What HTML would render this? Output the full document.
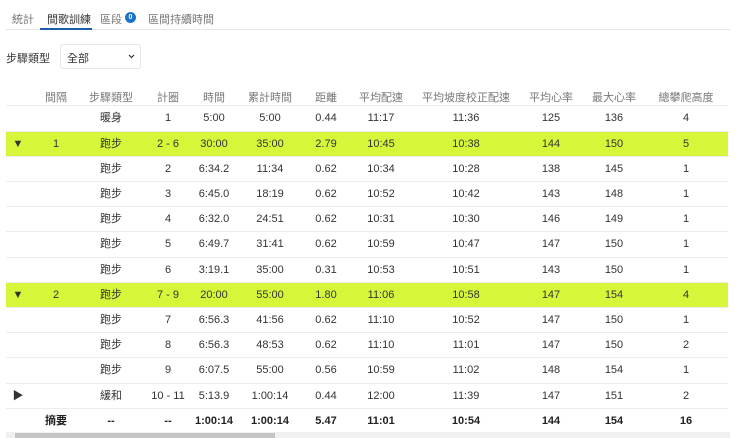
<!DOCTYPE html><html><head><meta charset="utf-8"><style>
*{margin:0;padding:0;box-sizing:border-box}
body{width:740px;height:438px;overflow:hidden;background:#fff;font-family:"Liberation Sans","Noto Sans CJK TC",sans-serif;font-size:11px;color:#333;position:relative}
.a{position:absolute}
.r{position:absolute;left:6px;width:722px;height:25.2px;border-bottom:1px solid #ececec}
.r span{position:absolute;top:0;line-height:25px;width:80px;text-align:center;white-space:nowrap}
.g{background:#d6f63a}
.h span{color:#777}
.b span{font-weight:bold;color:#222}
</style></head><body>
<div class="a" style="top:11px;left:12px;color:#777">統計</div>
<div class="a" style="top:11px;left:47px;color:#333">間歌訓練</div>
<div class="a" style="top:11px;left:100px;color:#777">區段</div>
<div class="a" style="top:12px;left:125px;width:11px;height:11px;border-radius:6px;background:#1a73c8;color:#fff;font-size:7px;text-align:center;line-height:11px;font-weight:bold">0</div>
<div class="a" style="top:11px;left:148px;color:#777">區間持續時間</div>
<div class="a" style="top:29px;left:6px;width:724px;height:1px;background:#e6e6e6"></div>
<div class="a" style="top:28px;left:40px;width:52px;height:2px;background:#1a5fa8"></div>
<div class="a" style="top:50px;left:6px">步驟類型</div>
<div class="a" style="top:44px;left:60px;width:81px;height:25px;border:1px solid #e6e6e6;border-radius:3px"></div>
<div class="a" style="top:50px;left:67px">全部</div>
<svg class="a" style="top:54px;left:128px" width="7" height="5"><path d="M1 1L3.5 3.5L6 1" stroke="#333" fill="none" stroke-width="1.2"/></svg>
<div class="r h" style="top:85px;height:21.4px"><span style="left:10px;line-height:26px">間隔</span><span style="left:65px;line-height:26px">步驟類型</span><span style="left:122px;line-height:26px">計圈</span><span style="left:168px;line-height:26px">時間</span><span style="left:224px;line-height:26px">累計時間</span><span style="left:280px;line-height:26px">距離</span><span style="left:335px;line-height:26px">平均配速</span><span style="left:400px;width:120px;line-height:26px">平均坡度校正配速</span><span style="left:505px;line-height:26px">平均心率</span><span style="left:568px;line-height:26px">最大心率</span><span style="left:640px;line-height:26px">總攀爬高度</span></div>
<div class="r" style="top:106.4px"><span style="left:65px">暖身</span><span style="left:122px">1</span><span style="left:168px">5:00</span><span style="left:224px">5:00</span><span style="left:280px">0.44</span><span style="left:335px">11:17</span><span style="left:420px">11:36</span><span style="left:505px">125</span><span style="left:568px">136</span><span style="left:640px">4</span></div>
<div class="r g" style="top:131.6px"><span style="left:-28px">▼</span><span style="left:10px">1</span><span style="left:65px">跑步</span><span style="left:122px">2 - 6</span><span style="left:168px">30:00</span><span style="left:224px">35:00</span><span style="left:280px">2.79</span><span style="left:335px">10:45</span><span style="left:420px">10:38</span><span style="left:505px">144</span><span style="left:568px">150</span><span style="left:640px">5</span></div>
<div class="r" style="top:156.8px"><span style="left:65px">跑步</span><span style="left:122px">2</span><span style="left:168px">6:34.2</span><span style="left:224px">11:34</span><span style="left:280px">0.62</span><span style="left:335px">10:34</span><span style="left:420px">10:28</span><span style="left:505px">138</span><span style="left:568px">145</span><span style="left:640px">1</span></div>
<div class="r" style="top:182px"><span style="left:65px">跑步</span><span style="left:122px">3</span><span style="left:168px">6:45.0</span><span style="left:224px">18:19</span><span style="left:280px">0.62</span><span style="left:335px">10:52</span><span style="left:420px">10:42</span><span style="left:505px">143</span><span style="left:568px">148</span><span style="left:640px">1</span></div>
<div class="r" style="top:207.2px"><span style="left:65px">跑步</span><span style="left:122px">4</span><span style="left:168px">6:32.0</span><span style="left:224px">24:51</span><span style="left:280px">0.62</span><span style="left:335px">10:31</span><span style="left:420px">10:30</span><span style="left:505px">146</span><span style="left:568px">149</span><span style="left:640px">1</span></div>
<div class="r" style="top:232.4px"><span style="left:65px">跑步</span><span style="left:122px">5</span><span style="left:168px">6:49.7</span><span style="left:224px">31:41</span><span style="left:280px">0.62</span><span style="left:335px">10:59</span><span style="left:420px">10:47</span><span style="left:505px">147</span><span style="left:568px">150</span><span style="left:640px">1</span></div>
<div class="r" style="top:257.6px"><span style="left:65px">跑步</span><span style="left:122px">6</span><span style="left:168px">3:19.1</span><span style="left:224px">35:00</span><span style="left:280px">0.31</span><span style="left:335px">10:53</span><span style="left:420px">10:51</span><span style="left:505px">143</span><span style="left:568px">150</span><span style="left:640px">1</span></div>
<div class="r g" style="top:282.8px"><span style="left:-28px">▼</span><span style="left:10px">2</span><span style="left:65px">跑步</span><span style="left:122px">7 - 9</span><span style="left:168px">20:00</span><span style="left:224px">55:00</span><span style="left:280px">1.80</span><span style="left:335px">11:06</span><span style="left:420px">10:58</span><span style="left:505px">147</span><span style="left:568px">154</span><span style="left:640px">4</span></div>
<div class="r" style="top:308px"><span style="left:65px">跑步</span><span style="left:122px">7</span><span style="left:168px">6:56.3</span><span style="left:224px">41:56</span><span style="left:280px">0.62</span><span style="left:335px">11:10</span><span style="left:420px">10:52</span><span style="left:505px">147</span><span style="left:568px">150</span><span style="left:640px">1</span></div>
<div class="r" style="top:333.2px"><span style="left:65px">跑步</span><span style="left:122px">8</span><span style="left:168px">6:56.3</span><span style="left:224px">48:53</span><span style="left:280px">0.62</span><span style="left:335px">11:10</span><span style="left:420px">11:01</span><span style="left:505px">147</span><span style="left:568px">150</span><span style="left:640px">2</span></div>
<div class="r" style="top:358.4px"><span style="left:65px">跑步</span><span style="left:122px">9</span><span style="left:168px">6:07.5</span><span style="left:224px">55:00</span><span style="left:280px">0.56</span><span style="left:335px">10:59</span><span style="left:420px">11:02</span><span style="left:505px">148</span><span style="left:568px">154</span><span style="left:640px">1</span></div>
<div class="r" style="top:383.6px"><span style="left:-28px">▶</span><span style="left:65px">緩和</span><span style="left:122px">10 - 11</span><span style="left:168px">5:13.9</span><span style="left:224px">1:00:14</span><span style="left:280px">0.44</span><span style="left:335px">12:00</span><span style="left:420px">11:39</span><span style="left:505px">147</span><span style="left:568px">151</span><span style="left:640px">2</span></div>
<div class="r b" style="top:408.8px"><span style="left:10px">摘要</span><span style="left:65px">--</span><span style="left:122px">--</span><span style="left:168px">1:00:14</span><span style="left:224px">1:00:14</span><span style="left:280px">5.47</span><span style="left:335px">11:01</span><span style="left:420px">10:54</span><span style="left:505px">144</span><span style="left:568px">154</span><span style="left:640px">16</span></div>
<div class="a" style="top:432px;left:6px;width:724px;height:6px;background:#f0f0f0"></div>
<div class="a" style="top:433px;left:15px;width:260px;height:5px;background:#c4c4c4"></div>
</body></html>
